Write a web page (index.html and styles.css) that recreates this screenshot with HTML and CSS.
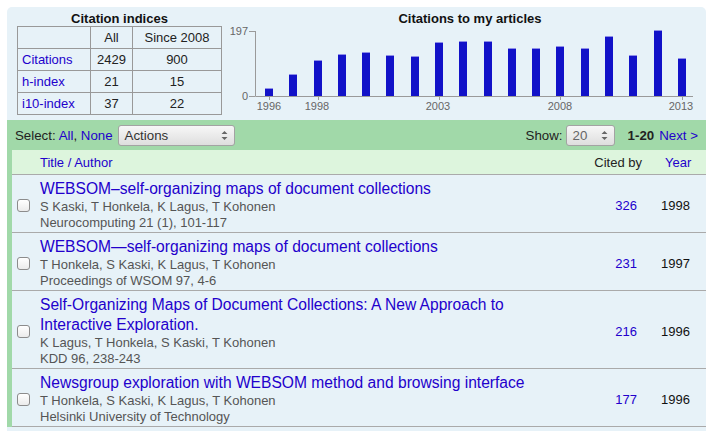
FILE: index.html
```html
<!DOCTYPE html>
<html>
<head>
<meta charset="utf-8">
<title>Citations</title>
<link rel="stylesheet" href="styles.css">
</head>
<body>
<div class="page">
 <div class="panel">
  <div class="stats">
   <div class="indices">
    <div class="stats-title">Citation indices</div>
    <table class="idx">
     <tr><th class="c1"></th><th class="c2">All</th><th class="c3">Since 2008</th></tr>
     <tr><td class="name"><a href="#">Citations</a></td><td>2429</td><td>900</td></tr>
     <tr><td class="name"><a href="#">h-index</a></td><td>21</td><td>15</td></tr>
     <tr><td class="name"><a href="#">i10-index</a></td><td>37</td><td>22</td></tr>
    </table>
   </div>
   <div class="chart">
    <div class="stats-title chart-title">Citations to my articles</div>
    <svg class="hist" width="480" height="87" viewBox="0 0 480 87">
     <g fill="#1212c8">
      <rect x="39" y="62" width="8" height="8"/>
      <rect x="63" y="48" width="8" height="22"/>
      <rect x="88" y="34" width="8" height="36"/>
      <rect x="112" y="28" width="8" height="42"/>
      <rect x="136" y="26" width="8" height="44"/>
      <rect x="160" y="29" width="8" height="41"/>
      <rect x="185" y="30" width="8" height="40"/>
      <rect x="209" y="16" width="8" height="54"/>
      <rect x="233" y="15" width="8" height="55"/>
      <rect x="258" y="15" width="8" height="55"/>
      <rect x="282" y="22" width="8" height="48"/>
      <rect x="306" y="22" width="8" height="48"/>
      <rect x="330" y="20" width="8" height="50"/>
      <rect x="355" y="22" width="8" height="48"/>
      <rect x="379" y="10" width="8" height="60"/>
      <rect x="403" y="29" width="8" height="41"/>
      <rect x="428" y="4" width="8" height="66"/>
      <rect x="452" y="32" width="8" height="38"/>
     </g>
     <g fill="#8f8fe8">
      <rect x="39" y="62" width="8" height="1"/>
      <rect x="63" y="48" width="8" height="1"/>
      <rect x="88" y="34" width="8" height="1"/>
      <rect x="112" y="28" width="8" height="1"/>
      <rect x="136" y="26" width="8" height="1"/>
      <rect x="160" y="29" width="8" height="1"/>
      <rect x="185" y="30" width="8" height="1"/>
      <rect x="209" y="16" width="8" height="1"/>
      <rect x="233" y="15" width="8" height="1"/>
      <rect x="258" y="15" width="8" height="1"/>
      <rect x="282" y="22" width="8" height="1"/>
      <rect x="306" y="22" width="8" height="1"/>
      <rect x="330" y="20" width="8" height="1"/>
      <rect x="355" y="22" width="8" height="1"/>
      <rect x="379" y="10" width="8" height="1"/>
      <rect x="403" y="29" width="8" height="1"/>
      <rect x="428" y="4" width="8" height="1"/>
      <rect x="452" y="32" width="8" height="1"/>
     </g>
     <g stroke="#9a9a9a" stroke-width="1" fill="none">
      <path d="M29.5 5 V70.5 H467"/>
      <path d="M23 5.5 H29 M23 70.5 H29"/>
      <path d="M43.5 71 V74 M92.5 71 V74 M213.5 71 V74 M334.5 71 V74 M456.5 71 V74"/>
     </g>
     <g class="axis-text">
      <text x="22" y="8.5" text-anchor="end">197</text>
      <text x="22" y="74" text-anchor="end">0</text>
      <text x="43" y="84" text-anchor="middle">1996</text>
      <text x="91" y="84" text-anchor="middle">1998</text>
      <text x="212" y="84" text-anchor="middle">2003</text>
      <text x="334" y="84" text-anchor="middle">2008</text>
      <text x="455" y="84" text-anchor="middle">2013</text>
     </g>
    </svg>
   </div>
  </div>

  <div class="toolbar">
   <span>Select: <a href="#">All</a>, <a href="#">None</a></span>
   <span class="dropdown actions">Actions
    <svg class="spin" width="7" height="11" viewBox="0 0 7 11"><path d="M0.5 4 L3.5 1 L6.5 4 Z M0.5 7 L3.5 10 L6.5 7 Z" fill="#666"/></svg>
   </span>
   <span class="spacer"></span>
   <span>Show:</span>
   <span class="dropdown count">20
    <svg class="spin" width="7" height="11" viewBox="0 0 7 11"><path d="M0.5 4 L3.5 1 L6.5 4 Z M0.5 7 L3.5 10 L6.5 7 Z" fill="#666"/></svg>
   </span>
   <b class="range">1-20</b>
   <a href="#" class="next">Next &gt;</a>
  </div>

  <div class="list">
   <div class="list-head">
    <span class="chk"></span>
    <a href="#" class="main">Title / Author</a>
    <span class="cite">Cited by</span>
    <a href="#" class="year">Year</a>
   </div>

   <div class="row">
    <span class="chk"><input type="checkbox"></span>
    <div class="main">
     <a href="#" class="title">WEBSOM–self-organizing maps of document collections</a>
     <div class="meta">S Kaski, T Honkela, K Lagus, T Kohonen</div>
     <div class="meta">Neurocomputing 21 (1), 101-117</div>
    </div>
    <a href="#" class="cite">326</a>
    <span class="year">1998</span>
   </div>

   <div class="row">
    <span class="chk"><input type="checkbox"></span>
    <div class="main">
     <a href="#" class="title">WEBSOM—self-organizing maps of document collections</a>
     <div class="meta">T Honkela, S Kaski, K Lagus, T Kohonen</div>
     <div class="meta">Proceedings of WSOM 97, 4-6</div>
    </div>
    <a href="#" class="cite">231</a>
    <span class="year">1997</span>
   </div>

   <div class="row">
    <span class="chk"><input type="checkbox"></span>
    <div class="main">
     <a href="#" class="title">Self-Organizing Maps of Document Collections: A New Approach to Interactive Exploration.</a>
     <div class="meta">K Lagus, T Honkela, S Kaski, T Kohonen</div>
     <div class="meta">KDD 96, 238-243</div>
    </div>
    <a href="#" class="cite">216</a>
    <span class="year">1996</span>
   </div>

   <div class="row">
    <span class="chk"><input type="checkbox"></span>
    <div class="main">
     <a href="#" class="title">Newsgroup exploration with WEBSOM method and browsing interface</a>
     <div class="meta">T Honkela, S Kaski, K Lagus, T Kohonen</div>
     <div class="meta">Helsinki University of Technology</div>
    </div>
    <a href="#" class="cite">177</a>
    <span class="year">1996</span>
   </div>
  </div>
 </div>
</div>
</body>
</html>
```

FILE: styles.css
```css
body {
	margin: 0;
	font-family: "Liberation Sans", Arial, sans-serif;
	font-size: 13px;
	color: #222;
	background: #fff;
}
a { color: #2200cc; text-decoration: none; }

.page { padding: 7px 6px 0 7px; height: 424px; overflow: hidden; }
.panel { background: #e7f2f8; border-radius: 5px 5px 0 0; height: 100%; }

.stats { display: flex; height: 113px; }
.indices { padding-left: 10px; width: 205px; }
.stats-title { font-weight: bold; text-align: center; padding-top: 5px; line-height: 14px; color: #111; }
.chart { margin-left: 4px; width: 480px; }
.chart-title { padding-left: 8px; }
.hist { display: block; }
.axis-text { font-family: "Liberation Sans", Arial, sans-serif; font-size: 11px; fill: #666; }

.idx { border-collapse: collapse; border: 1px solid #999; }
.idx th, .idx td { border: 1px solid #999; height: 21px; padding: 0 4px; font-weight: normal; text-align: center; line-height: 15px; }
.idx .c1 { width: 64px; }
.idx .c2 { width: 33px; }
.idx .c3 { width: 80px; }
.idx td.name { text-align: left; }

.toolbar { display: flex; align-items: center; height: 30px; background: #a1d9a9; padding: 0 8px; font-size: 13.3px; }
.toolbar .spacer { flex: 1; }
.dropdown {
	display: flex; align-items: center; justify-content: space-between;
	height: 19px; margin-left: 5px; padding: 0 6px;
	border: 1px solid #a3a3a3; border-radius: 3px;
	background: linear-gradient(#f7f7f7, #dedede);
	color: #333;
}
.actions { width: 103px; }
.count { width: 35px; color: #666; margin-right: 13px; margin-left: 3px; }
.spin { display: block; }
.range { margin-right: 5px; }

.list { border-left: 5px solid #a1d9a9; }
.list-head { display: flex; align-items: center; height: 24px; background: #ddf5dd; border-bottom: 1px solid #aaa; }
.chk { width: 28px; flex: none; display: flex; align-items: center; }
.main { flex: 1; padding-right: 12px; }
.cite { width: 60px; flex: none; text-align: right; }
.year { width: 62px; flex: none; }
.list-head .cite { padding-right: 2px; box-sizing: border-box; color: #222; }
.list-head .year { padding-left: 21px; box-sizing: border-box; }

.row { display: flex; align-items: center; padding: 4px 0 1px; border-bottom: 1px solid #aaa; }
.row .cite { padding-right: 7px; box-sizing: border-box; }
.row .year { padding-left: 17px; box-sizing: border-box; color: #111; }
.title { display: block; font-size: 15.6px; line-height: 20px; }
.meta { color: #555; line-height: 16px; }

.chk input {
	appearance: none; -webkit-appearance: none;
	width: 13px; height: 13px; margin: 0 0 0 5px;
	border: 1px solid #8c8c8c; border-radius: 3px;
	background: linear-gradient(#fff, #ebebeb);
}
```
